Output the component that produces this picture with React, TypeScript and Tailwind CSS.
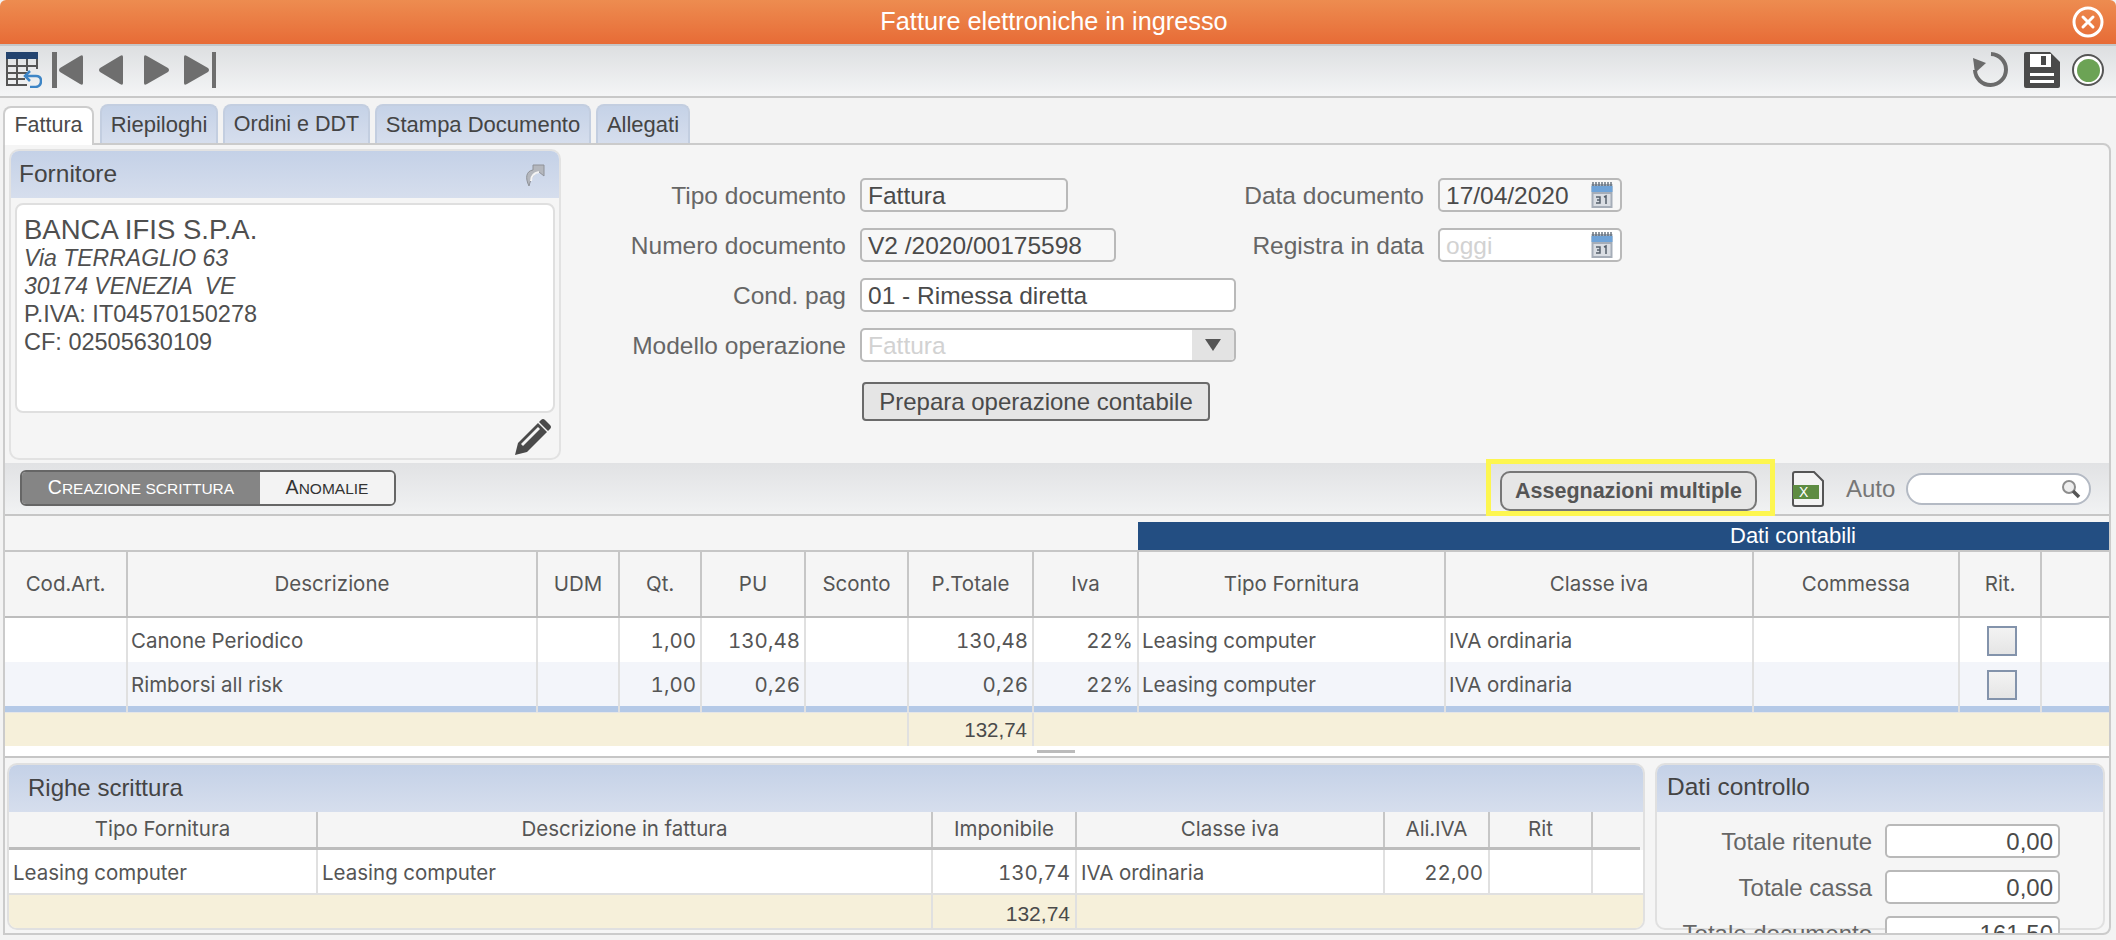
const sans = "font-['Liberation_Sans',Arial,sans-serif]";
const ui = "font-['Inter',sans-serif] tabular-nums text-[20.5px]";

function Cal() {
  return (
    <svg width="22" height="26" viewBox="0 0 22 26" className="shrink-0">
      <rect x="0.5" y="2" width="21" height="24" fill="#a5adb8" />
      <rect x="0.5" y="4" width="21" height="6" fill="#6fa3d8" />
      <rect x="2.5" y="12" width="17" height="12" fill="#d9dde3" />
      <path d="M2 0v4M5 0v4M8 0v4M11 0v4M14 0v4M17 0v4M20 0v4" stroke="#5f6b78" strokeWidth="1.4" />
      <path d="M5 15h4v3h-3M9 18v3h-4M13 15l2-1v8" stroke="#56606c" strokeWidth="1.5" fill="none" />
    </svg>
  );
}

function Field({ label, w, value, muted, white, arrow, cal }: { label: string; w: string; value: string; muted?: boolean; white?: boolean; arrow?: boolean; cal?: boolean }) {
  return (
    <div className="flex items-center h-[34px]">
      <span className="flex-1 text-right pr-[14px] pt-[2px] text-[#666] whitespace-nowrap">{label}</span>
      <div className={`${w} h-[34px] rounded-[5px] border-2 border-[#b9b9b9] flex items-center overflow-hidden ${white || muted ? "bg-white" : "bg-[#f7f7f7]"}`}>
        <span className={`pl-[6px] pt-[2px] flex-1 whitespace-nowrap ${muted ? "text-[#d2d2d2]" : "text-[#4a4a4a]"}`}>{value}</span>
        {cal && <span className="pr-[7px] flex"><Cal /></span>}
        {arrow && (
          <span className="w-[42px] h-full bg-[#e3e3e3] flex items-center justify-center">
            <svg width="16" height="12" viewBox="0 0 16 12"><path d="M0 0h16l-8 12z" fill="#555" /></svg>
          </span>
        )}
      </div>
    </div>
  );
}

const topCols = ["w-[123px]", "w-[410px]", "w-[82px]", "w-[82px]", "w-[104px]", "w-[103px]", "w-[125px]", "w-[105px]", "w-[307px]", "w-[308px]", "w-[206px]", "w-[82px]", "flex-1"];
const topHead = ["Cod.Art.", "Descrizione", "UDM", "Qt.", "PU", "Sconto", "P.Totale", "Iva", "Tipo Fornitura", "Classe iva", "Commessa", "Rit.", ""];
const topRows: { cells: string[]; bg: string }[] = [
  { cells: ["", "Canone Periodico", "", "1,00", "130,48", "", "130,48", "22%", "Leasing computer", "IVA ordinaria", "", "", ""], bg: "bg-white" },
  { cells: ["", "Rimborsi all risk", "", "1,00", "0,26", "", "0,26", "22%", "Leasing computer", "IVA ordinaria", "", "", ""], bg: "bg-[#f3f5fa]" },
];
const rightAligned = [3, 4, 5, 6, 7];

const botCols = ["w-[309px]", "w-[615px]", "w-[144px]", "w-[308px]", "w-[105px]", "w-[103px]", "flex-1"];
const botHead = ["Tipo Fornitura", "Descrizione in fattura", "Imponibile", "Classe iva", "Ali.IVA", "Rit", ""];
const botRow = ["Leasing computer", "Leasing computer", "130,74", "IVA ordinaria", "22,00", "", ""];

export default function App() {
  return (
    <div className={`${sans} w-[2116px] h-[940px] overflow-hidden bg-[#f3f3f3] text-[24.5px] leading-none text-[#4a4a4a] flex flex-col`}>
      <div className="h-[44px] shrink-0 bg-gradient-to-b from-[#ed8c50] to-[#e76b36] flex items-center text-white text-[25.3px] relative justify-center rounded-t-[6px] pr-[8px]">
        Fatture elettroniche in ingresso
        <svg width="32" height="32" viewBox="0 0 32 32" className="absolute right-[12px] top-[6px]">
          <circle cx="16" cy="16" r="14" fill="none" stroke="#fff" strokeWidth="3" />
          <path d="M11 11l10 10M21 11l-10 10" stroke="#fff" strokeWidth="3" strokeLinecap="round" />
        </svg>
      </div>
      <div className="h-[54px] shrink-0 border-b-2 border-t-2 border-t-[#c4c6c8] border-b-[#c8c8c8] bg-gradient-to-b from-[#dddfe1] to-[#f4f5f6] flex items-center justify-between pl-[6px] pr-[12px] pb-[2px]">
        <div className="flex items-center">
          <svg width="36" height="36" viewBox="0 0 36 36">
            <rect x="0" y="0" width="32" height="7" fill="#24446f" />
            <path d="M1 7v26h20M11 7v26M21 7v12M31 7v10M1 14h30M1 21h20M1 27h18" stroke="#555" strokeWidth="2" fill="none" />
            <path d="M24 19l-5 5 5 5" fill="none" stroke="#3d85c6" strokeWidth="2.5" />
            <path d="M19 24h11q5 0 5 5t-5 6h-6" fill="none" stroke="#3d85c6" strokeWidth="2.5" />
          </svg>
          <svg width="31" height="36" viewBox="0 0 31 36" fill="#6e6e6e" className="ml-[10px]">
            <rect x="0" y="0" width="5" height="36" />
            <path d="M31 5v26q0 3-3 1L8 20q-2-2 0-4L28 4q3-2 3 1z" />
          </svg>
          <svg width="24" height="30" viewBox="0 0 24 30" fill="#6e6e6e" className="ml-[16px]">
            <path d="M24 2v26q0 3-3 1L1 17q-2-2 0-4L21 1q3-2 3 1z" />
          </svg>
          <svg width="25" height="30" viewBox="0 0 25 30" fill="#6e6e6e" className="ml-[21px]">
            <path d="M0 2v26q0 3 3 1l21-12q2-2 0-4L3 1Q0-1 0 2z" />
          </svg>
          <svg width="32" height="36" viewBox="0 0 32 36" fill="#6e6e6e" className="ml-[15px]">
            <rect x="28" y="0" width="4" height="36" />
            <path d="M0 5v26q0 3 3 1l21-12q2-2 0-4L3 4Q0 2 0 5z" />
          </svg>
        </div>
        <div className="flex items-center">
          <svg width="36" height="36" viewBox="0 0 36 36" fill="none">
            <path d="M19 2a15.5 15.5 0 1 1-16 16" stroke="#6b6b6b" strokeWidth="4" />
            <path d="M1 6l13 5-11 10z" fill="#6b6b6b" />
          </svg>
          <svg width="36" height="36" viewBox="0 0 36 36" className="ml-[16px]">
            <path d="M2 0h24l10 10v24q0 2-2 2H2q-2 0-2-2V2q0-2 2-2z" fill="#4a4a4a" />
            <rect x="6" y="2" width="21" height="13" fill="#fff" />
            <rect x="17" y="4" width="5" height="9" fill="#4a4a4a" />
            <rect x="6" y="21" width="24" height="3" fill="#fff" />
            <rect x="6" y="28" width="24" height="3" fill="#fff" />
          </svg>
          <span className="ml-[12px] w-[32px] h-[32px] rounded-full bg-white border-2 border-[#555] flex items-center justify-center">
            <span className="w-[23px] h-[23px] rounded-full bg-[#6ca355]" />
          </span>
        </div>
      </div>
      <div className="h-[45px] shrink-0 flex items-end pl-[3px] gap-[5px] relative text-[22px]">
        <div className="w-[91px] h-[39px] mr-[1px] rounded-t-[8px] border-2 border-b-0 border-[#cdcdcd] bg-white flex items-center justify-center relative top-[2px] z-10 text-[21.5px] pb-[2px]">Fattura</div>
        {[["w-[118px]", "Riepiloghi", ""], ["w-[147px]", "Ordini e DDT", "text-[21.5px]"], ["w-[216px]", "Stampa Documento", ""], ["w-[94px]", "Allegati", ""]].map(([w, t, s]) => (
          <div key={t} className={`${w} ${s} h-[39px] rounded-t-[8px] border-2 border-b-0 border-[#c3cee0] bg-gradient-to-b from-[#c5d2e7] to-[#d6deed] flex items-center justify-center text-[#444] whitespace-nowrap`}>{t}</div>
        ))}
      </div>
      <div className="w-[2108px] ml-[3px] flex-1 min-h-0 border-2 border-[#cbcbcb] rounded-r-[8px] bg-[#f5f5f5] flex flex-col overflow-hidden">
        <div className="h-[318px] shrink-0 flex pl-[4px] pt-[4px]">
          <div className="w-[552px] h-[311px] rounded-[10px] border-2 border-[#e2e2e2] overflow-hidden flex flex-col">
            <div className="h-[47px] shrink-0 bg-gradient-to-b from-[#c4d1e7] to-[#d6deed] flex items-center justify-between pl-[8px] pr-[14px] text-[#444]">
              <span>Fornitore</span>
              <svg width="20" height="24" viewBox="0 0 20 24">
                <path d="M4 23C0 15 1 8 8 7V2h11v11l-5-4c-5 1-8 6-10 14z" fill="#b4b7bd" stroke="#8f9298" strokeWidth="1" />
                <path d="M6 18c0-5 3-8 8-9" stroke="#f4f4f4" strokeWidth="2" fill="none" />
              </svg>
            </div>
            <div className="mx-[4px] mt-[5px] h-[210px] shrink-0 rounded-[8px] border-2 border-[#dfdfdf] bg-white pl-[7px] pt-[10px] text-[#4f4f4f] leading-[28px] text-[23.5px]">
              <div className="text-[27.5px] leading-[29px]">BANCA IFIS S.P.A.</div>
              <div className="italic text-[23px]">Via TERRAGLIO 63</div>
              <div className="italic whitespace-pre text-[23px]">30174 VENEZIA  VE</div>
              <div>P.IVA: IT04570150278</div>
              <div>CF: 02505630109</div>
            </div>
            <div className="flex-1 flex justify-end items-center pr-[7px] pt-[2px]">
              <svg width="38" height="38" viewBox="0 0 38 38">
                <path d="M1 37l3-12L24 5l9 9-20 20z" fill="#4a4a4a" />
                <path d="M27 2q2-2 4 0l5 5q2 2 0 4l-2 2-9-9z" fill="#4a4a4a" />
                <path d="M7 26L24 9l2 2L9 28z" fill="#f5f5f5" />
              </svg>
            </div>
          </div>
          <div className="ml-[62px] mt-[29px] w-[613px] flex flex-col gap-[16px]">
            <Field label="Tipo documento" w="w-[208px] mr-[168px]" value="Fattura" />
            <Field label="Numero documento" w="w-[256px] mr-[120px]" value="V2 /2020/00175598" />
            <Field label="Cond. pag" w="w-[376px]" value="01 - Rimessa diretta" white />
            <Field label="Modello operazione" w="w-[376px]" value="Fattura" muted arrow />
            <div className="flex justify-end mt-[4px]">
              <button className="w-[348px] h-[39px] mr-[26px] rounded-[4px] border-2 border-[#6a6a6a] bg-[#e5e5e5] text-[#4a4a4a] text-[24px]">Prepara operazione contabile</button>
            </div>
          </div>
          <div className="mt-[29px] w-[386px] flex flex-col gap-[16px]">
            <Field label="Data documento" w="w-[184px]" value="17/04/2020" cal />
            <Field label="Registra in data" w="w-[184px]" value="oggi" muted cal />
          </div>
        </div>
        <div className="h-[53px] shrink-0 bg-gradient-to-b from-[#e1e2e4] to-[#f1f2f3] border-b-2 border-[#c6c6c6] flex items-center justify-between pl-[15px] pr-[18px]">
          <div className="flex h-[36px] w-[376px] mb-[2px] rounded-[6px] border-2 border-[#666] overflow-hidden text-[19.5px]">
            <div className="w-[238px] bg-[#858585] text-white flex items-center justify-center"><span>C<span className="text-[15.5px]">REAZIONE SCRITTURA</span></span></div>
            <div className="flex-1 bg-[#f3f3f3] text-[#333] flex items-center justify-center"><span>A<span className="text-[15.5px]">NOMALIE</span></span></div>
          </div>
          <div className="flex items-center">
            <div className="w-[289px] h-[57px] border-[5px] border-[#fdf650] pl-[9px] pt-[7px] relative -top-[1px]">
              <button className="w-[257px] h-[40px] pt-[2px] rounded-[10px] border-2 border-[#777] bg-[#e6e6e6] font-bold text-[#555] text-[21.5px]">Assegnazioni multiple</button>
            </div>
            <svg width="32" height="36" viewBox="0 0 32 36" className="ml-[17px]">
              <path d="M3 1h19l9 9v23q0 2-2 2H3q-2 0-2-2V3q0-2 2-2z" fill="#f3f3f3" stroke="#555" strokeWidth="2" />
              <rect x="1" y="14" width="26" height="14" fill="#5e8c42" />
              <text x="7" y="26" fontSize="14" fill="#fff" fontFamily="Liberation Sans">X</text>
            </svg>
            <span className="ml-[22px] text-[#777] text-[24px] w-[50px] whitespace-nowrap">Auto</span>
            <div className="ml-[10px] w-[185px] h-[32px] rounded-full border-2 border-[#b4bac4] bg-white flex items-center justify-end pr-[8px]">
              <svg width="20" height="20" viewBox="0 0 20 20" fill="none">
                <circle cx="8" cy="8" r="6" stroke="#8d8d8d" strokeWidth="2" fill="#eee" />
                <path d="M12 12l6 6" stroke="#555" strokeWidth="3.5" />
              </svg>
            </div>
          </div>
        </div>
        <div className="h-[36px] shrink-0 flex border-b-[2px] border-[#c6c6c6] pt-[6px]">
          <div className="w-[1133px]" />
          <div className="flex-1 bg-[#234e82] text-white flex items-center pl-[592px] text-[22px] whitespace-nowrap">Dati contabili</div>
        </div>
        <div className="flex flex-col shrink-0">
          <div className={`h-[66px] flex border-b-[2px] border-[#bdbdbd] text-[#555] ${ui}`}>
            {topHead.map((h, i) => (
              <div key={i} className={`${topCols[i]} ${i < 12 ? "border-r-2 border-[#c6c6c6]" : ""} flex items-center justify-center whitespace-nowrap`}>{h}</div>
            ))}
          </div>
          {topRows.map((r, ri) => (
            <div key={ri} className={`h-[44px] flex ${r.bg} ${ui} text-[#555]`}>
              {r.cells.map((c, i) => (
                <div key={i} className={`${topCols[i]} ${i < 12 ? "border-r-2 border-[#e0e0e0]" : ""} flex items-center pt-[2px] ${rightAligned.includes(i) ? "justify-end pr-[4px]" : "pl-[3px]"} ${i === 11 ? "justify-center" : ""} whitespace-nowrap`}>
                  {i === 11 ? <span className="w-[30px] h-[30px] border-2 border-[#8393ab] bg-gradient-to-b from-[#f3f3f3] to-[#e5e5e5]" /> : c}
                </div>
              ))}
            </div>
          ))}
          <div className="h-[6px] flex bg-[#b4c9e7]">
            {topCols.map((c, i) => <div key={i} className={`${c} ${i < 12 ? "border-r-2 border-[#e0e0e0]" : ""}`} />)}
          </div>
          <div className="h-[1px] bg-[#e6e6e6]" />
          <div className="h-[33px] flex bg-[#f6f0da] text-[20.5px]">
            <div className="w-[904px] border-r-2 border-[#e0e0e0]" />
            <div className="w-[125px] border-r-2 border-[#e0e0e0] flex items-center justify-end pr-[5px] pt-[1px]">132,74</div>
          </div>
          <div className="h-[10px] bg-white flex justify-center items-center">
            <div className="w-[38px] h-[3px] bg-[#bbb] ml-[-3px]" />
          </div>
        </div>
        <div className="flex-1 min-h-0 border-t-2 border-[#c6c6c6] flex gap-[10px] pl-[2px] pt-[5px]">
          <div className="w-[1638px] h-[167px] rounded-[10px] border-2 border-[#e0e0e0] overflow-hidden flex flex-col">
            <div className="h-[47px] shrink-0 bg-gradient-to-b from-[#c4d1e7] to-[#d6deed] flex items-center pl-[19px] pb-[2px] text-[#444] text-[24px]">Righe scrittura</div>
            <div className={`h-[38px] shrink-0 flex border-b-[3px] border-[#bdbdbd] text-[#555] mr-[3px] ${ui}`}>
              {botHead.map((h, i) => (
                <div key={i} className={`${botCols[i]} ${i < 6 ? "border-r-2 border-[#c6c6c6]" : ""} flex items-center justify-center whitespace-nowrap`}>{h}</div>
              ))}
            </div>
            <div className={`h-[45px] shrink-0 flex bg-white border-b-2 border-[#e0e0e0] text-[#555] ${ui}`}>
              {botRow.map((c, i) => (
                <div key={i} className={`${botCols[i]} ${i < 6 ? "border-r-2 border-[#e0e0e0]" : ""} flex items-center pt-[3px] ${i === 2 || i === 4 ? "justify-end pr-[5px]" : "pl-[4px]"} whitespace-nowrap`}>{c}</div>
              ))}
            </div>
            <div className="flex-1 flex bg-[#f6f0da] text-[21px]">
              <div className="w-[924px] border-r-2 border-[#e0e0e0]" />
              <div className="w-[144px] border-r-2 border-[#e0e0e0] flex items-center justify-end pr-[5px] pt-[3px]">132,74</div>
            </div>
          </div>
          <div className="w-[450px] h-[167px] rounded-[10px] border-2 border-[#e0e0e0] flex flex-col">
            <div className="h-[47px] shrink-0 rounded-t-[8px] bg-gradient-to-b from-[#c4d1e7] to-[#d6deed] flex items-center pl-[10px] pb-[2px] text-[#444]">Dati controllo</div>
            <div className="mt-[12px] flex flex-col gap-[12px] text-[24px]">
              {[["Totale ritenute", "0,00"], ["Totale cassa", "0,00"], ["Totale documento", "161,50"]].map(([l, v]) => (
                <div key={l} className="flex items-center h-[34px]">
                  <span className="flex-1 text-right pr-[13px] pt-[2px] text-[#666] whitespace-nowrap">{l}</span>
                  <span className="w-[175px] mr-[43px] h-[34px] rounded-[5px] border-2 border-[#b9b9b9] bg-white flex items-center justify-end pr-[5px] pt-[2px] shrink-0">{v}</span>
                </div>
              ))}
            </div>
          </div>
        </div>
      </div>
      <div className="h-[5px] shrink-0" />
    </div>
  );
}
